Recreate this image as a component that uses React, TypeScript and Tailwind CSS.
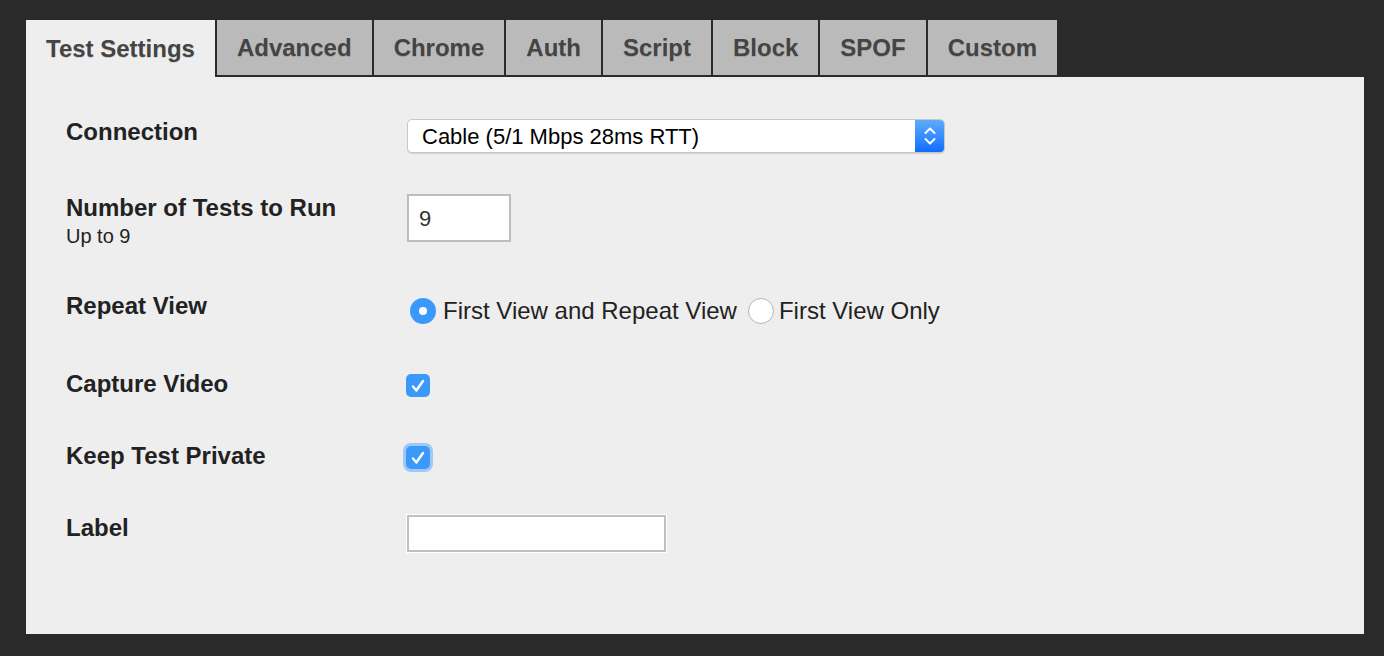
import React from "react";

const tabs = ["Test Settings", "Advanced", "Chrome", "Auth", "Script", "Block", "SPOF", "Custom"];

function Checkbox({ focused }: { focused?: boolean }) {
  return (
    <div
      className={`w-[24px] h-[23px] rounded-[5px] bg-[#3b99fc] flex items-center justify-center ${
        focused ? "shadow-[0_0_0_3px_rgba(59,153,252,0.45)]" : ""
      }`}
    >
      <svg width="16" height="16" viewBox="0 0 16 16" fill="none">
        <path d="M3 8.5 L6.3 12.5 L13 3" stroke="white" strokeWidth="2.3" strokeLinecap="round" strokeLinejoin="round" />
      </svg>
    </div>
  );
}

function Radio({ checked }: { checked?: boolean }) {
  return checked ? (
    <div className="w-[26px] h-[26px] rounded-full bg-[#3b99fc] flex items-center justify-center">
      <div className="w-[8px] h-[8px] rounded-full bg-white" />
    </div>
  ) : (
    <div className="w-[26px] h-[26px] rounded-full bg-white border border-[#b5b5b5]" />
  );
}

export default function App() {
  return (
    <div
      className="w-[1384px] h-[656px] bg-[#2a2a2a] pt-[20px] pl-[26px]"
      style={{ fontFamily: '"Liberation Sans", Arial, sans-serif' }}
    >
      <div className="w-[1338px]">
        {/* tabs */}
        <div className="flex h-[57px]">
          {tabs.map((t, i) =>
            i === 0 ? (
              <div key={t} className="px-[20px] bg-[#eeeeee] flex items-center text-[24px] font-bold text-[#444] [text-shadow:0_1px_0_rgba(0,0,0,0.15)]">
                {t}
              </div>
            ) : (
              <div
                key={t}
                className="px-[20px] bg-[#bababa] border-l-2 border-b-2 border-[#2a2a2a] flex items-center text-[24px] font-bold text-[#444] [text-shadow:0_1px_0_rgba(0,0,0,0.15)]"
              >
                {t}
              </div>
            )
          )}
          <div className="flex-1" />
        </div>

        {/* content */}
        <div className="bg-[#eeeeee] h-[557px] pt-[42px] pl-[40px] text-[#222]">
          <div className="flex h-[75px]">
            <div className="w-[341px] text-[24px] leading-[28px] font-bold -mt-[1px]">Connection</div>
            <div className="w-[538px] h-[34px] bg-white rounded-[5px] border border-[#c8c8c8] shadow-[0_1px_1px_rgba(0,0,0,0.12)] flex items-center overflow-hidden">
              <div className="flex-1 pl-[14px] text-[22px] text-black">Cable (5/1 Mbps 28ms RTT)</div>
              <div className="w-[29px] h-full bg-gradient-to-b from-[#5eaafc] to-[#0a6dfd] flex items-center justify-center">
                <svg width="14" height="22" viewBox="0 0 14 22" fill="none">
                  <path d="M2.5 8 L7 3.5 L11.5 8" stroke="white" strokeWidth="2" strokeLinecap="round" strokeLinejoin="round" />
                  <path d="M2.5 14 L7 18.5 L11.5 14" stroke="white" strokeWidth="2" strokeLinecap="round" strokeLinejoin="round" />
                </svg>
              </div>
            </div>
          </div>

          <div className="flex h-[99px]">
            <div className="w-[341px]">
              <div className="text-[24px] leading-[28px] font-bold">Number of Tests to Run</div>
              <div className="text-[20px] leading-[24px] mt-[2px]">Up to 9</div>
            </div>
            <div className="w-[104px] h-[48px] bg-white border-2 border-[#bdbdbd] flex items-center pl-[10px] text-[22px] text-[#333]">
              9
            </div>
          </div>

          <div className="flex h-[78px]">
            <div className="w-[341px] text-[24px] leading-[28px] font-bold -mt-[1px]">Repeat View</div>
            <div className="flex items-center h-[26px] mt-[5px] text-[24px] text-[#222] ml-[3px]">
              <Radio checked />
              <span className="ml-[7px]">First View and Repeat View</span>
              <div className="ml-[11px]">
                <Radio />
              </div>
              <span className="ml-[5px]">First View Only</span>
            </div>
          </div>

          <div className="flex h-[72px]">
            <div className="w-[341px] text-[24px] leading-[28px] font-bold -mt-[1px]">Capture Video</div>
            <div className="mt-[3px] -ml-[1px]">
              <Checkbox />
            </div>
          </div>

          <div className="flex h-[72px]">
            <div className="w-[341px] text-[24px] leading-[28px] font-bold -mt-[1px]">Keep Test Private</div>
            <div className="mt-[3px] -ml-[1px]">
              <Checkbox focused />
            </div>
          </div>

          <div className="flex">
            <div className="w-[341px] text-[24px] leading-[28px] font-bold -mt-[1px]">Label</div>
            <div className="-mt-[1px] -ml-[1px] border border-white">
              <div className="w-[259px] h-[37px] bg-white border-2 border-[#c0c0c0]" />
            </div>
          </div>
        </div>
      </div>
    </div>
  );
}
